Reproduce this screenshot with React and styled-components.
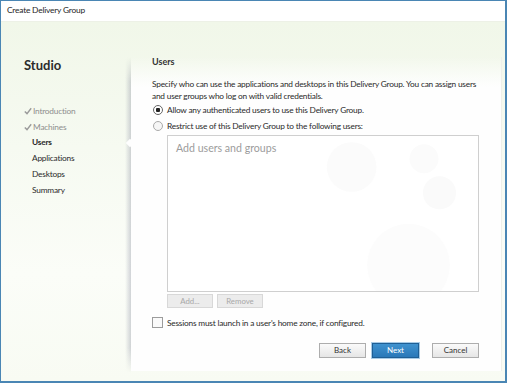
import React from 'react';
import styled, { createGlobalStyle } from 'styled-components';

const Global = createGlobalStyle`
	html, body {
		margin: 0;
		padding: 0;
		background: #ffffff;
	}
	body {
		font-family: Lato, "Open Sans", "Liberation Sans", sans-serif;
		color: #333;
	}
`;

const steps = [
	{label: 'Introduction', done: true},
	{label: 'Machines', done: true},
	{label: 'Users', current: true},
	{label: 'Applications'},
	{label: 'Desktops'},
	{label: 'Summary'},
];

const Check = () => (
	<svg width="8" height="8" viewBox="0 0 8 8">
		<path d="M0.8 4.4 L3 6.6 L7.2 1.2" fill="none" stroke="#9a9a9a" strokeWidth="1.4" />
	</svg>
);

const App = () => {
	return (
		<>
			<Global />
			<Window>
				<TitleBar>Create Delivery Group</TitleBar>
				<Body>
					<Sidebar>
						<Brand>Studio</Brand>
						<Steps>
							{steps.map((s) => (
								<Step key={s.label} $done={s.done} $current={s.current}>
									<CheckSlot>{s.done && <Check />}</CheckSlot>
									{s.label}
								</Step>
							))}
						</Steps>
					</Sidebar>
					<Panel>
						<Notch />
						<Heading>Users</Heading>
						<Description>
							Specify who can use the applications and desktops in this Delivery Group. You can assign users
							<br />
							and user groups who log on with valid credentials.
						</Description>
						<Options>
							<Option>
								<Radio $checked />
								Allow any authenticated users to use this Delivery Group.
							</Option>
							<Option>
								<Radio />
								Restrict use of this Delivery Group to the following users:
							</Option>
						</Options>
						<UserBox>
							<Placeholder>Add users and groups</Placeholder>
							<Watermark viewBox="0 0 160 150">
								<circle cx="40" cy="30" r="24" fill="#fbfbfb" />
								<circle cx="110" cy="22" r="14" fill="#fbfbfb" />
								<circle cx="125" cy="55" r="16" fill="#fafafa" />
								<circle cx="95" cy="125" r="40" fill="#fcfcfc" />
							</Watermark>
						</UserBox>
						<BoxButtons>
							<SmallButton disabled>Add...</SmallButton>
							<SmallButton disabled>Remove</SmallButton>
						</BoxButtons>
						<CheckRow>
							<CheckBox />
							Sessions must launch in a user's home zone, if configured.
						</CheckRow>
						<Footer>
							<WizardButton>Back</WizardButton>
							<WizardButton $primary>Next</WizardButton>
							<WizardButton $gap>Cancel</WizardButton>
						</Footer>
					</Panel>
				</Body>
			</Window>
		</>
	);
};

export default App;

const Window = styled.div`
	width: 507px;
	height: 383px;
	box-sizing: border-box;
	border: 1px solid #4a86b4;
	border-bottom-width: 2px;
	border-right-width: 2px;
	display: flex;
	flex-direction: column;
	background: #fff;
	overflow: hidden;
`;

const TitleBar = styled.div`
	height: 20px;
	flex: none;
	padding-left: 6px;
	font-size: 8.4px;
	letter-spacing: -0.2px;
	line-height: 19px;
	color: #1e1e1e;
	background: #fff;
`;

const Body = styled.div`
	flex: 1;
	display: flex;
	padding: 35px 3px 10px 0;
	background: linear-gradient(180deg, #f1f7e9 0%, #f6faf1 35%, #fbfdf8 70%, #f8fbf3 100%);
	border-top: 1px solid #edf1e6;
	min-height: 0;
`;

const Sidebar = styled.div`
	width: 130px;
	flex: none;
	display: flex;
	flex-direction: column;
	padding-left: 23px;
	box-sizing: border-box;
`;

const Brand = styled.div`
	font-size: 13px;
	font-weight: 700;
	color: #2b2b2b;
	margin-top: -2px;
	line-height: 20px;
`;

const Steps = styled.div`
	display: flex;
	flex-direction: column;
	margin-top: 28px;
`;

const Step = styled.div`
	display: flex;
	align-items: center;
	height: 15.8px;
	font-size: 8.3px;
	letter-spacing: -0.2px;
	color: ${(p) => (p.$done ? '#8e8e8e' : '#2a2a2a')};
	font-weight: ${(p) => (p.$current ? 700 : 400)};
	margin-left: ${(p) => (p.$done ? '0' : '-1px')};
`;

const CheckSlot = styled.span`
	width: 9px;
	display: inline-flex;
	align-items: center;
`;

const Panel = styled.div`
	position: relative;
	flex: 1;
	min-width: 0;
	display: flex;
	flex-direction: column;
	padding: 0 22px 0 21px;
	background: linear-gradient(180deg, rgba(254, 254, 254, 0) 0, #fefefe 30px);
	border-right: 1px solid #eef0ea;

	&::before {
		content: '';
		position: absolute;
		left: -6px;
		top: 0;
		bottom: -2px;
		width: 6px;
		background: linear-gradient(90deg, rgba(150, 155, 170, 0) 0%, rgba(130, 135, 155, 0.35) 100%);
		-webkit-mask-image: linear-gradient(180deg, transparent 0, #000 25px, #000 92%, transparent 100%);
		mask-image: linear-gradient(180deg, transparent 0, #000 25px, #000 92%, transparent 100%);
	}
`;

const Notch = styled.span`
	position: absolute;
	left: -4px;
	top: 83px;
	width: 6px;
	height: 6px;
	background: #fefefe;
	transform: rotate(45deg);
	z-index: 1;
`;

const Heading = styled.div`
	font-size: 9px;
	font-weight: 700;
	color: #333;
	line-height: 13px;
	margin-top: -2px;
`;

const Description = styled.div`
	font-size: 8.3px;
	letter-spacing: -0.2px;
	line-height: 12px;
	color: #2a2a2a;
	margin-top: 10px;
	white-space: nowrap;
`;

const Options = styled.div`
	display: flex;
	flex-direction: column;
	margin-top: 0;
`;

const Option = styled.div`
	display: flex;
	align-items: center;
	height: 16px;
	font-size: 8.3px;
	letter-spacing: -0.2px;
	color: #2a2a2a;
	gap: 4px;
`;

const Radio = styled.span`
	width: 8px;
	height: 8px;
	border-radius: 50%;
	border: 1px solid ${(p) => (p.$checked ? '#666' : '#aaa')};
	background: ${(p) => (p.$checked ? 'radial-gradient(circle, #222 0 2px, #fff 2.5px)' : '#f6f6f6')};
	flex: none;
	margin-left: 1px;
`;

const UserBox = styled.div`
	position: relative;
	margin: 1px 0 0 15px;
	height: 155px;
	border: 1px solid #cfcfcf;
	background: #fff;
	overflow: hidden;
`;

const Placeholder = styled.div`
	position: relative;
	z-index: 1;
	padding: 6px 0 0 8px;
	font-size: 10.6px;
	color: #9c9c9c;
`;

const Watermark = styled.svg`
	position: absolute;
	right: 0;
	top: 0;
	width: 170px;
	height: 155px;
`;

const BoxButtons = styled.div`
	display: flex;
	gap: 4px;
	margin: 2px 0 0 15px;
`;

const SmallButton = styled.button`
	width: 46px;
	height: 14px;
	padding: 0;
	font-family: inherit;
	font-size: 7.8px;
	color: #a8a8a8;
	background: #ececec;
	border: 1px solid #d8d8d8;
`;

const CheckRow = styled.div`
	display: flex;
	align-items: center;
	gap: 4px;
	height: 11px;
	margin-top: 9px;
	font-size: 8.3px;
	letter-spacing: -0.2px;
	color: #2a2a2a;
`;

const CheckBox = styled.span`
	width: 9px;
	height: 9px;
	border: 1px solid #9c9c9c;
	background: #fafafa;
	flex: none;
`;

const Footer = styled.div`
	display: flex;
	justify-content: flex-end;
	gap: 6px;
	margin-top: 15px;
`;

const WizardButton = styled.button`
	width: 47px;
	height: 15px;
	padding: 0;
	font-family: inherit;
	font-size: 8px;
	line-height: 13px;
	margin-left: ${(p) => (p.$gap ? '7px' : '0')};
	color: ${(p) => (p.$primary ? '#fff' : '#333')};
	background: ${(p) => (p.$primary ? 'linear-gradient(180deg, #3f92cf 0%, #2a78b8 100%)' : 'linear-gradient(180deg, #fafafa 0%, #e6e6e6 100%)')};
	border: 1px solid ${(p) => (p.$primary ? '#1f5f95' : '#adadad')};
	box-shadow: ${(p) => (p.$primary ? '0 0 0 1px #a8cbe6' : 'none')};
`;
